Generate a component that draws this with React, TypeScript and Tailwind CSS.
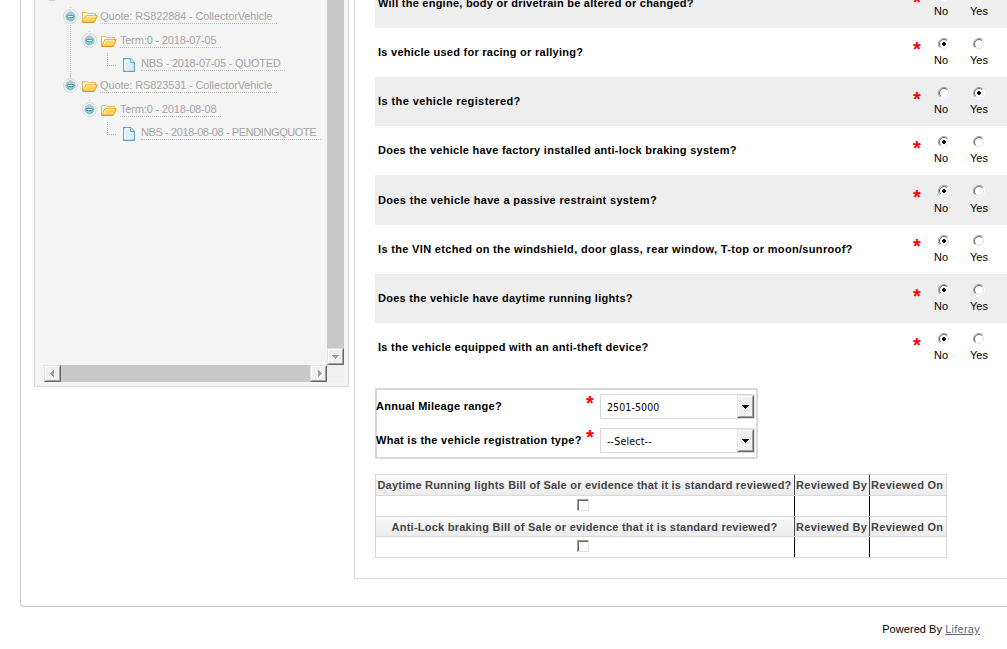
import type { ReactNode } from "react";

type Question = { text: string; track: string; answer: "No" | "Yes"; height: string; shade: string; drop: string; star: string };

const white = "bg-white";
const gray = "bg-[#eeeeee]";

const questions: Question[] = [
  { text: "Will the engine, body or drivetrain be altered or changed?", track: "tracking-[0.25px]", answer: "No", height: "h-[49px]", shade: gray, drop: "", star: "pt-[13px]" },
  { text: "Is vehicle used for racing or rallying?", track: "tracking-[0.26px]", answer: "No", height: "h-[49px]", shade: white, drop: "", star: "pt-[11px]" },
  { text: "Is the vehicle registered?", track: "tracking-[0.41px]", answer: "Yes", height: "h-[49px]", shade: gray, drop: "", star: "pt-[12px]" },
  { text: "Does the vehicle have factory installed anti-lock braking system?", track: "tracking-[0.27px]", answer: "No", height: "h-[49px]", shade: white, drop: "", star: "pt-[12px]" },
  { text: "Does the vehicle have a passive restraint system?", track: "tracking-[0.34px]", answer: "No", height: "h-[50px]", shade: gray, drop: "pt-px", star: "pt-[12px]" },
  { text: "Is the VIN etched on the windshield, door glass, rear window, T-top or moon/sunroof?", track: "tracking-[0.33px]", answer: "No", height: "h-[49px]", shade: white, drop: "", star: "pt-[11px]" },
  { text: "Does the vehicle have daytime running lights?", track: "tracking-[0.27px]", answer: "No", height: "h-[49px]", shade: gray, drop: "", star: "pt-[12px]" },
  { text: "Is the vehicle equipped with an anti-theft device?", track: "tracking-[0.29px]", answer: "No", height: "h-[49px]", shade: white, drop: "", star: "pt-[12px]" },
];

function Radio({ checked }: { checked: boolean }) {
  return (
    <svg width="12" height="12" viewBox="0 0 12 12" className="block shrink-0">
      <circle cx="6" cy="6" r="5" fill="#fff" />
      <path d="M2.1 9.9A5.5 5.5 0 0 1 9.9 2.1" fill="none" stroke="#a0a0a0" strokeWidth="1" />
      <path d="M2.8 9.2A4.5 4.5 0 0 1 9.2 2.8" fill="none" stroke="#696969" strokeWidth="1" />
      <path d="M9.9 2.1A5.5 5.5 0 0 1 2.1 9.9" fill="none" stroke="#ffffff" strokeWidth="1" />
      <path d="M9.2 2.8A4.5 4.5 0 0 1 2.8 9.2" fill="none" stroke="#e3e3e3" strokeWidth="1" />
      {checked && <path d="M5 4h2v1h1v2h-1v1h-2v-1h-1v-2h1z" fill="#000" shapeRendering="crispEdges" />}
    </svg>
  );
}

function Star() {
  return <span className="block h-[20px] w-[8px] text-[20px] font-bold leading-[20px] text-[#ff0000]">*</span>;
}

function QuestionRow({ q }: { q: Question }) {
  return (
    <div className={`flex shrink-0 ${q.height} ${q.shade}`}>
      <div className={`flex w-[538px] items-center pl-[3px] ${q.drop}`}>
        <span className={`whitespace-nowrap text-[11px] font-bold leading-[13px] ${q.track}`}>{q.text}</span>
      </div>
      <div className={`w-[21px] ${q.star}`}>
        <Star />
      </div>
      <div className="w-[36px] pt-[10px]">
        <div className="pl-[4px]">
          <Radio checked={q.answer === "No"} />
        </div>
        <div className={`pt-[4px] ${q.drop && "mt-px"}`}>
          <span className="block text-[11px] leading-[13px]">No</span>
        </div>
      </div>
      <div className="w-[37px] pt-[10px]">
        <div className="pl-[3px]">
          <Radio checked={q.answer === "Yes"} />
        </div>
        <div className={`pt-[4px] ${q.drop && "mt-px"}`}>
          <span className="block text-[11px] leading-[13px]">Yes</span>
        </div>
      </div>
    </div>
  );
}

function Toggle() {
  return (
    <svg width="16" height="24" viewBox="0 0 16 24" className="block shrink-0">
      <path d="M8.5 3v4" stroke="#bdbdbd" strokeDasharray="1 1" shapeRendering="crispEdges" />
      <circle cx="8.5" cy="12.5" r="6.9" fill="#fcfcfc" stroke="#d2d2d2" strokeWidth="1" />
      <circle cx="8.5" cy="12.5" r="4.6" fill="#79ccd2" stroke="#93b4c4" strokeWidth="1" />
      <path d="M4.4 11.5a4.1 3.8 0 0 1 8.2 0z" fill="#a9c9d6" />
      <path d="M5.5 12.5h6" stroke="#41929f" strokeWidth="2.6" />
      <path d="M6 12.5h5" stroke="#ffffff" strokeWidth="1.1" />
    </svg>
  );
}

function Folder() {
  return (
    <svg width="16" height="12" viewBox="0 0 16 12" className="block shrink-0">
      <path d="M0.5 11V1.5h4l1.5 1h7.5v2.5" fill="#fffbe6" stroke="#e8b54e" />
      <path d="M1 11.3L3.8 4.7H15.3L12.3 11.3z" fill="#fbd65c" stroke="#e9a030" />
      <path d="M2.7 9.5L4.5 5.6H13.6" fill="none" stroke="#fff3b8" />
      <path d="M0.5 11.4h11.5" stroke="#e28b2a" strokeWidth="1" />
    </svg>
  );
}

function Doc() {
  return (
    <svg width="12" height="14" viewBox="0 0 12 14" className="block shrink-0">
      <path d="M0.6 0.6H7.6L11.4 4.4V13.4H0.6z" fill="#dceff8" stroke="#64a5b9" strokeWidth="1.2" />
      <path d="M1.8 12.2V1.8H6.8" fill="none" stroke="#ffffff" />
      <path d="M7.5 0.8V4.5H11.2" fill="#ffffff" stroke="#64a5b9" />
    </svg>
  );
}

function Elbow() {
  return (
    <svg width="9" height="21" viewBox="0 0 9 21" className="block shrink-0">
      <path d="M0.5 1v12.5M0 13.5h9" stroke="#b5b5b5" strokeDasharray="1 1" fill="none" shapeRendering="crispEdges" />
    </svg>
  );
}

function TreeText({ children, box }: { children: ReactNode; box: string }) {
  return (
    <span
      className={`block h-[15px] whitespace-nowrap border-b border-dotted border-[#bdbdbd] text-[11px] leading-[14px] text-[#a5a5a5] ${box}`}
    >
      {children}
    </span>
  );
}

function TreeGroup(props: { quote: string; term: string; doc: string; docBox: string }) {
  return (
    <div className="h-[69px]">
      <div className="flex h-6 items-center pl-[27px]">
        <Toggle />
        <div className="pl-[4px] pt-[2px]">
          <Folder />
        </div>
        <div className="pl-[2px]">
          <TreeText box="w-[177px] tracking-[-0.13px]">{props.quote}</TreeText>
        </div>
      </div>
      <div className="flex h-6 items-center pl-[46px]">
        <Toggle />
        <div className="pl-[4px] pt-[2px]">
          <Folder />
        </div>
        <div className="pl-[3px]">
          <TreeText box="w-[101px] tracking-[-0.17px]">{props.term}</TreeText>
        </div>
      </div>
      <div className="flex h-[21px] items-center pl-[72px]">
        <Elbow />
        <div className="pl-[7px] pt-[4px]">
          <Doc />
        </div>
        <div className="pl-[6px] pt-[2px]">
          <TreeText box={props.docBox}>{props.doc}</TreeText>
        </div>
      </div>
    </div>
  );
}

function ScrollButton({ d }: { d: string }) {
  return (
    <div className="h-[17px] w-[17px] shrink-0 border border-b-[#696969] border-l-[#e3e3e3] border-r-[#696969] border-t-[#e3e3e3] bg-[#f0f0f0]">
      <div className="h-full w-full border border-b-[#a0a0a0] border-l-white border-r-[#a0a0a0] border-t-white">
        <svg width="13" height="13" viewBox="0 0 13 13" className="block" shapeRendering="crispEdges">
          <path d={d} transform="translate(1 1)" fill="#ffffff" />
          <path d={d} fill="#a0a0a0" />
        </svg>
      </div>
    </div>
  );
}

function SelectRow({ label, value, track, pad, valueTrack }: { label: string; value: string; track: string; pad: string; valueTrack: string }) {
  return (
    <div className="flex h-[25px]">
      <div className={`flex items-center ${pad}`}>
        <span className={`whitespace-nowrap text-[11px] font-bold leading-[13px] ${track}`}>{label}</span>
      </div>
      <div className="-mt-px w-[14px]">
        <Star />
      </div>
      <div className="flex h-[25px] w-[155px] border border-[#d9d9d9] bg-white">
        <span className={`w-[136px] whitespace-nowrap pl-[6px] font-['DejaVu_Sans_Condensed','DejaVu_Sans',sans-serif] text-[10.5px] leading-[24px] ${valueTrack}`}>{value}</span>
        <div className="h-[23px] w-[17px] border border-b-[#696969] border-l-[#e3e3e3] border-r-[#696969] border-t-[#e3e3e3] bg-[#f0f0f0]">
          <div className="h-full w-full border border-b-[#a0a0a0] border-l-white border-r-[#a0a0a0] border-t-white">
            <svg width="13" height="19" viewBox="0 0 13 19" className="block" shapeRendering="crispEdges">
              <path d="M3 8h7v1h-1v1h-1v1h-1v1h-1v-1h-1v-1h-1v-1h-1z" fill="#000" />
            </svg>
          </div>
        </div>
      </div>
    </div>
  );
}

function HeadRow({ label, height, track }: { label: string; height: string; track: string }) {
  return (
    <div className={`flex ${height} border-b border-[#d9d9d9] bg-linear-to-b from-[#fafafa] to-[#ebebeb] text-[11px] font-bold leading-[13px] text-[#444444]`}>
      <div className={`w-[418px] whitespace-nowrap pr-px pt-[4px] text-center ${track}`}>{label}</div>
      <div className="w-[75px] whitespace-nowrap border-l border-[#444444] pl-px pt-[4px] tracking-[0.3px]">Reviewed By</div>
      <div className="w-[77px] whitespace-nowrap border-l border-[#444444] pl-px pt-[4px] tracking-[0.3px]">Reviewed On</div>
    </div>
  );
}

function CheckRow() {
  return (
    <div className="flex h-[21px] border-b border-[#d9d9d9]">
      <div className="w-[418px] pl-[201px] pt-[3px]">
        <div className="h-3 w-3 border border-b-[#e3e3e3] border-l-[#a0a0a0] border-r-[#e3e3e3] border-t-[#a0a0a0]">
          <div className="h-full w-full border-l border-t border-[#696969] bg-white" />
        </div>
      </div>
      <div className="w-[75px] border-l border-black" />
      <div className="w-[77px] border-l border-black" />
    </div>
  );
}

export default function App() {
  return (
    <div className="h-[649px] w-[1007px] overflow-hidden bg-white font-['Liberation_Sans',Arial,sans-serif] text-black">
      <div className="pl-5">
        <div className="flex h-[607px] rounded-bl-[4px] border-b border-l border-[#c8c8c8] pl-[13px]">
          <aside className="flex h-[387px] w-[315px] shrink-0 flex-col border-b border-l border-r border-[#d9d9d9] bg-[#f4f4f4]">
            <div className="flex h-[365px]">
              <div className="relative w-[292px] overflow-hidden pt-1">
                <svg width="52" height="80" viewBox="0 0 52 80" className="absolute left-0 top-0">
                  <circle cx="17" cy="-6.2" r="7" fill="#fafafa" stroke="#c9c9c9" />
                  <path d="M35.5 7v70" stroke="#bdbdbd" strokeDasharray="1 1" shapeRendering="crispEdges" />
                </svg>
                <div className="relative">
                  <TreeGroup
                    quote="Quote: RS822884 - CollectorVehicle"
                    term="Term:0 - 2018-07-05"
                    doc="NBS - 2018-07-05 - QUOTED"
                    docBox="w-[144px] tracking-[-0.24px]"
                  />
                  <TreeGroup
                    quote="Quote: RS823531 - CollectorVehicle"
                    term="Term:0 - 2018-08-08"
                    doc="NBS - 2018-08-08 - PENDINGQUOTE"
                    docBox="w-[180px] tracking-[-0.4px]"
                  />
                </div>
              </div>
              <div className="flex w-[17px] flex-col justify-end bg-[#c8c8c8]">
                <ScrollButton d="M3 5h7v1h-1v1h-1v1h-1v1h-1v-1h-1v-1h-1v-1h-1z" />
              </div>
            </div>
            <div className="flex h-[17px] pl-[9px]">
              <div className="flex w-[283px] justify-between bg-[#c8c8c8]">
                <ScrollButton d="M8 3v7h-1v-1h-1v-1h-1v-1h-1v-1h1v-1h1v-1h1v-1z" />
                <ScrollButton d="M6 3v7h1v-1h1v-1h1v-1h1v-1h-1v-1h-1v-1h-1v-1z" />
              </div>
              <div className="w-[17px] bg-[#efefef]" />
            </div>
          </aside>

          <main className="ml-[5px] flex h-[579px] w-[653px] shrink-0 flex-col border-b border-l border-[#d9d9d9] pl-5">
            <div className="-mt-[21px] flex flex-col">
              {questions.map((q) => (
                <QuestionRow key={q.text} q={q} />
              ))}
            </div>

            <div className="mt-4 flex h-[71px] w-[383px] shrink-0 flex-col gap-[9px] border-2 border-[#d9d9d9] pt-[4px]">
              <SelectRow label="Annual Mileage range?" value="2501-5000" track="tracking-[0.26px]" pad="-ml-px w-[210px]" valueTrack="tracking-[0.1px]" />
              <SelectRow label="What is the vehicle registration type?" value="--Select--" track="tracking-[0.28px]" pad="-ml-px w-[210px]" valueTrack="tracking-[0.2px]" />
            </div>

            <div className="mt-[15px] w-[572px] shrink-0 border-l border-r border-t border-[#d9d9d9]">
              <HeadRow label="Daytime Running lights Bill of Sale or evidence that it is standard reviewed?" height="h-[21px]" track="tracking-[0.21px]" />
              <CheckRow />
              <HeadRow label="Anti-Lock braking Bill of Sale or evidence that it is standard reviewed?" height="h-[20px]" track="tracking-[0.24px]" />
              <CheckRow />
            </div>
          </main>
        </div>
      </div>
      <footer className="flex justify-end pr-[27px] pt-[16px] text-[11px] leading-[13px]">
        <span className="whitespace-pre tracking-[0.05px]">Powered By </span>
        <a className="tracking-[0.26px] text-[#5b677d] underline">Liferay</a>
      </footer>
    </div>
  );
}
